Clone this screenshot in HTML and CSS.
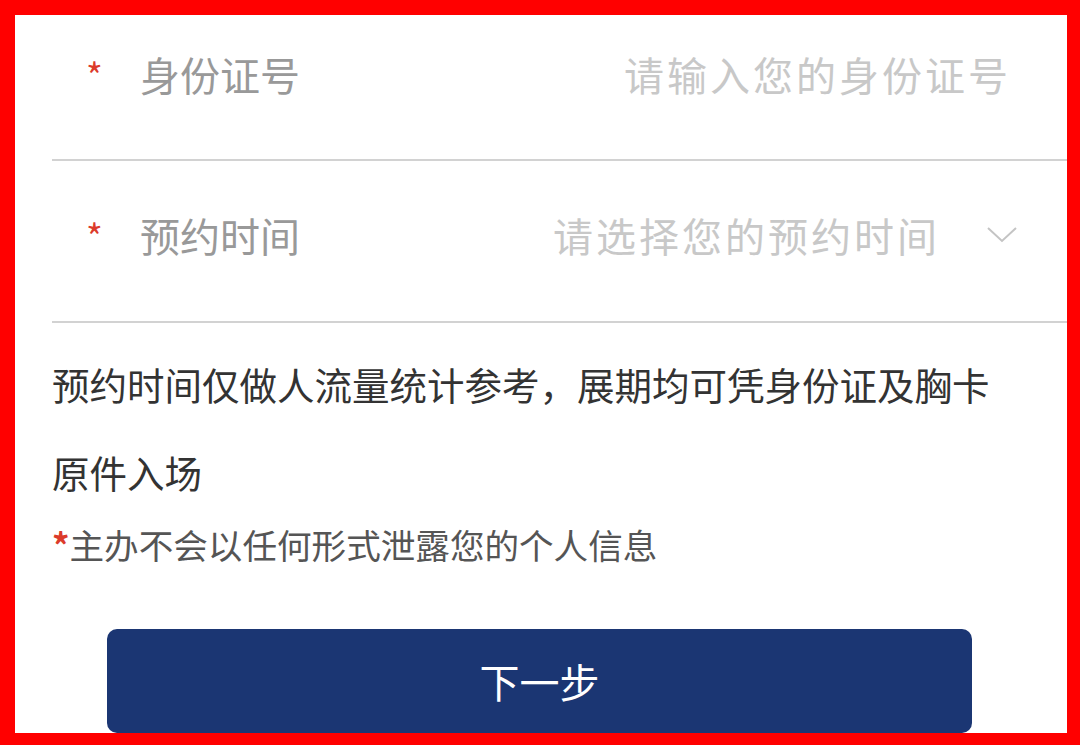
FILE: index.html
```html
<!DOCTYPE html>
<html lang="zh-CN">
<head>
    <meta charset="UTF-8">
    <meta name="viewport" content="width=device-width, initial-scale=1.0">
    <title>预约登记</title>
    <link rel="stylesheet" href="styles.css">
</head>
<body>
    <div class="frame">
        <form class="form" action="#" method="post">
            <div class="field">
                <span class="star">*</span>
                <label class="label" for="id_card">身份证号</label>
                <input class="input" type="text" id="id_card" name="id_card" placeholder="请输入您的身份证号">
            </div>

            <div class="field">
                <span class="star">*</span>
                <span class="label">预约时间</span>
                <div class="picker">请选择您的预约时间</div>
                <svg class="chevron" width="30" height="16" viewBox="0 0 30 16">
                    <polyline points="1,1 15,14 29,1" fill="none" stroke="#c4c4c4" stroke-width="2"/>
                </svg>
            </div>

            <p class="tip">预约时间仅做人流量统计参考，展期均可凭身份证及胸卡原件入场</p>
            <p class="note"><span class="note-star">*</span>主办不会以任何形式泄露您的个人信息</p>

            <button type="button" class="next">下一步</button>
        </form>
    </div>
</body>
</html>
```

FILE: styles.css
```css
html, body {
    margin: 0;
    padding: 0;
}

body {
    font-family: "Noto Sans CJK SC", "Noto Sans", sans-serif;
    background: #fff;
}

.frame {
    box-sizing: border-box;
    width: 1080px;
    height: 745px;
    border-style: solid;
    border-color: #ff0000;
    border-width: 15px 13px 12px 15px;
    background: #fff;
    overflow: hidden;
}

/* page is scrolled a bit, first row is cut at the top */
.form {
    margin-top: -14px;
}

.field {
    display: flex;
    align-items: center;
    box-sizing: border-box;
    height: 160px;
    margin-left: 37px;
    padding-left: 34px;
    padding-bottom: 12px;
    border-bottom: 2px solid #d2d2d2;
}

.field + .field {
    height: 162px;
}

.star {
    width: 54px;
    flex: none;
    color: #dc3b2b;
    font-size: 36px;
}

.label {
    flex: none;
    color: #999;
    font-size: 40px;
}

.input {
    flex: 1;
    min-width: 0;
    border: none;
    outline: none;
    background: transparent;
    padding: 0 56px 0 0;
    text-align: right;
    font-family: inherit;
    font-size: 40px;
    letter-spacing: 3px;
    color: #333;
}

.input::placeholder {
    color: #c8c8c8;
}

.picker {
    flex: 1;
    text-align: right;
    color: #c8c8c8;
    font-size: 40px;
    letter-spacing: 3px;
}

.chevron {
    flex: none;
    margin-left: 47px;
    margin-right: 50px;
}

.tip {
    margin: 17px 50px 0 37px;
    font-size: 37.5px;
    line-height: 88px;
    color: #333;
}

.note {
    margin: 3px 0 0 37px;
    font-size: 34.6px;
    line-height: 50px;
    color: #555;
}

.note-star {
    color: #dc3b2b;
    font-weight: bold;
}

.next {
    display: block;
    width: 865px;
    height: 104px;
    margin: 60px 0 0 92px;
    border: none;
    border-radius: 10px;
    background: #1b3673;
    color: #fff;
    font-family: inherit;
    font-size: 40px;
    cursor: pointer;
}
```
